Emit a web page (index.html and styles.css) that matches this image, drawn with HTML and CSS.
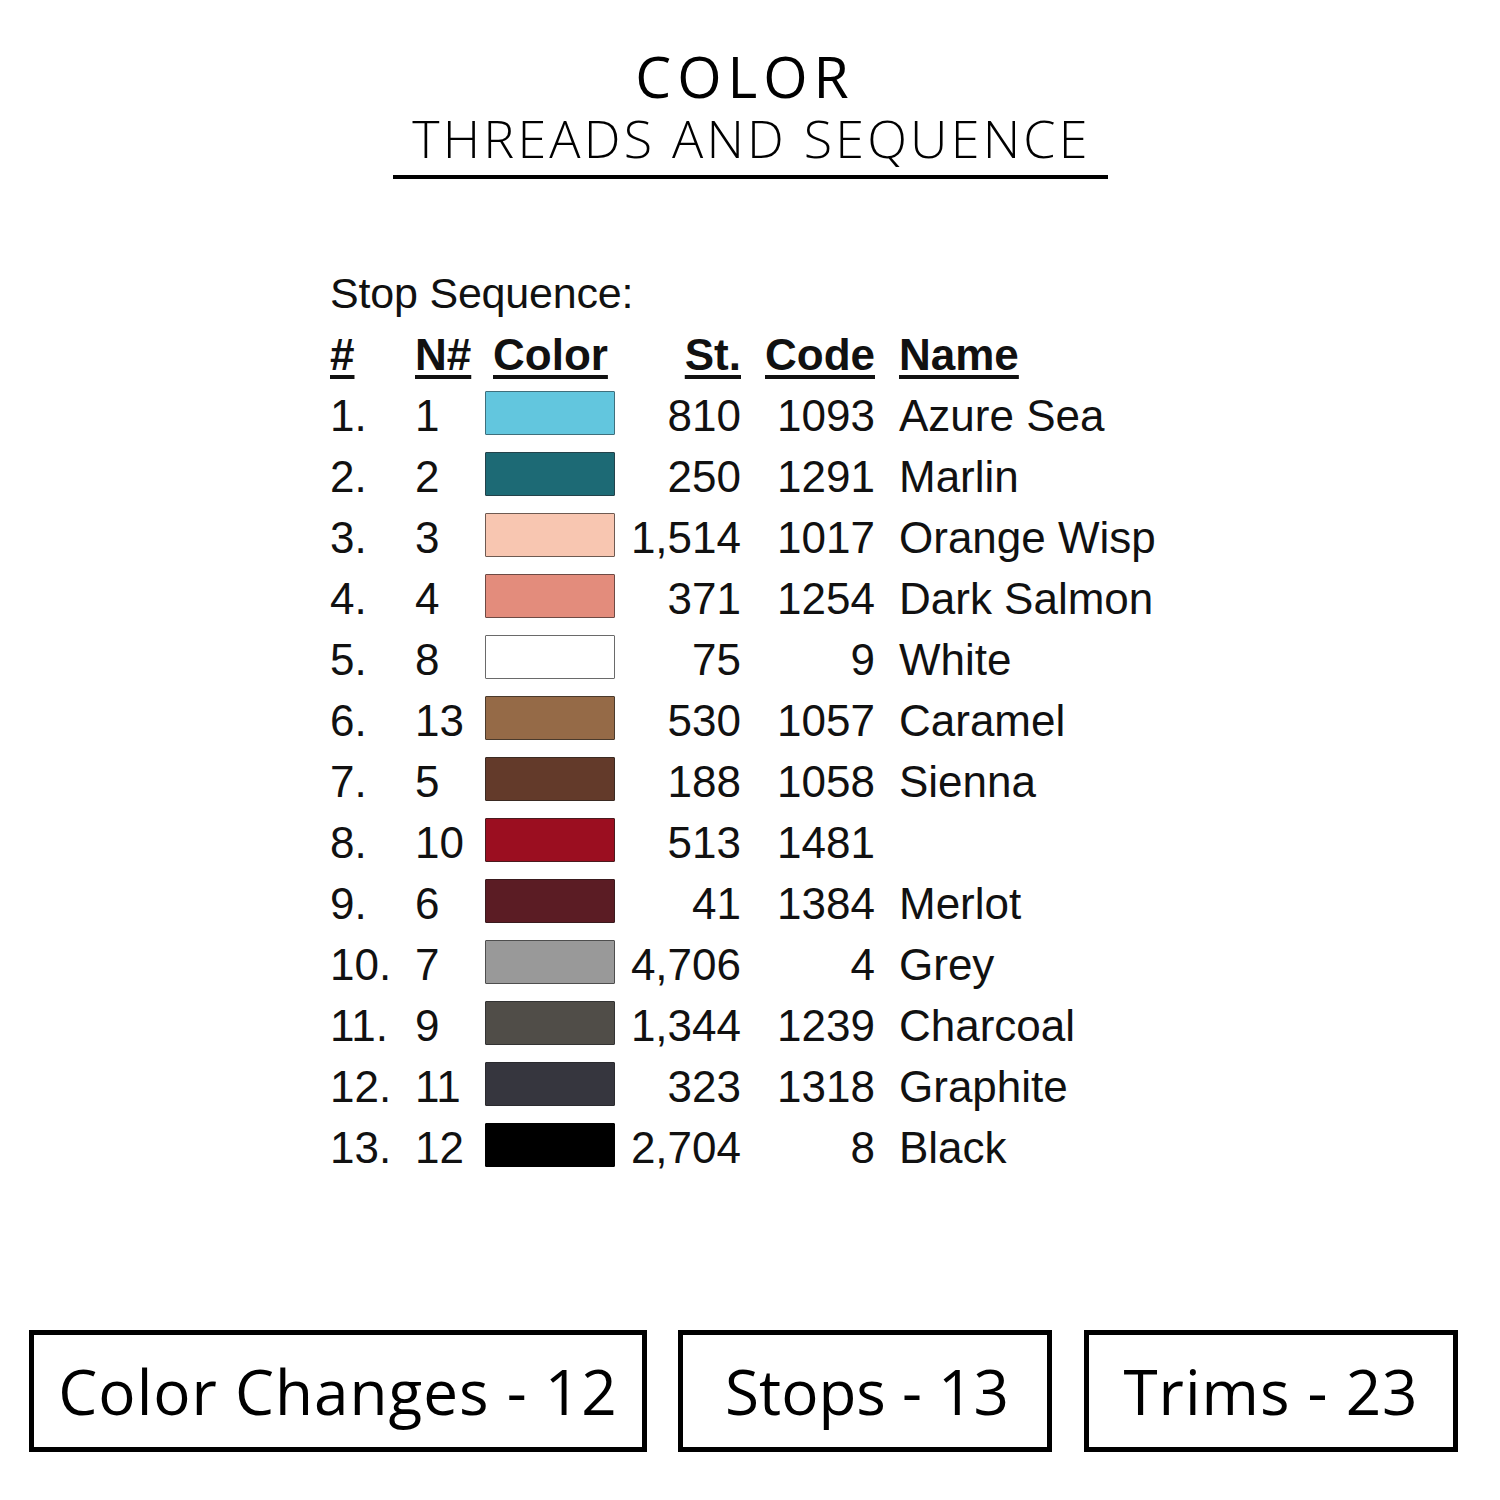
FILE: index.html
```html
<!DOCTYPE html>
<html lang="en">
<head>
<meta charset="utf-8">
<title>Color Threads and Sequence</title>
<link rel="stylesheet" href="styles.css">
</head>
<body>
<div class="page">
  <header class="title-block">
    <h1 class="title">COLOR</h1>
    <h2 class="subtitle">THREADS AND SEQUENCE</h2>
    <div class="rule"></div>
  </header>

  <section class="sequence">
    <div class="seq-label">Stop Sequence:</div>
    <div class="grid">
      <div class="hd c1"><u>#</u></div>
      <div class="hd c2"><u>N#</u></div>
      <div class="hd c3"><u>Color</u></div>
      <div class="hd c4"><u>St.</u></div>
      <div class="hd c5"><u>Code</u></div>
      <div class="hd c6"><u>Name</u></div>

      <div class="c1">1.</div><div class="c2">1</div><div class="c3"><span class="sw sw-azure"></span></div><div class="c4">810</div><div class="c5">1093</div><div class="c6">Azure Sea</div>
      <div class="c1">2.</div><div class="c2">2</div><div class="c3"><span class="sw sw-marlin"></span></div><div class="c4">250</div><div class="c5">1291</div><div class="c6">Marlin</div>
      <div class="c1">3.</div><div class="c2">3</div><div class="c3"><span class="sw sw-wisp"></span></div><div class="c4">1,514</div><div class="c5">1017</div><div class="c6">Orange Wisp</div>
      <div class="c1">4.</div><div class="c2">4</div><div class="c3"><span class="sw sw-salmon"></span></div><div class="c4">371</div><div class="c5">1254</div><div class="c6">Dark Salmon</div>
      <div class="c1">5.</div><div class="c2">8</div><div class="c3"><span class="sw sw-white"></span></div><div class="c4">75</div><div class="c5">9</div><div class="c6">White</div>
      <div class="c1">6.</div><div class="c2">13</div><div class="c3"><span class="sw sw-caramel"></span></div><div class="c4">530</div><div class="c5">1057</div><div class="c6">Caramel</div>
      <div class="c1">7.</div><div class="c2">5</div><div class="c3"><span class="sw sw-sienna"></span></div><div class="c4">188</div><div class="c5">1058</div><div class="c6">Sienna</div>
      <div class="c1">8.</div><div class="c2">10</div><div class="c3"><span class="sw sw-red"></span></div><div class="c4">513</div><div class="c5">1481</div><div class="c6"></div>
      <div class="c1">9.</div><div class="c2">6</div><div class="c3"><span class="sw sw-merlot"></span></div><div class="c4">41</div><div class="c5">1384</div><div class="c6">Merlot</div>
      <div class="c1">10.</div><div class="c2">7</div><div class="c3"><span class="sw sw-grey"></span></div><div class="c4">4,706</div><div class="c5">4</div><div class="c6">Grey</div>
      <div class="c1">11.</div><div class="c2">9</div><div class="c3"><span class="sw sw-charcoal"></span></div><div class="c4">1,344</div><div class="c5">1239</div><div class="c6">Charcoal</div>
      <div class="c1">12.</div><div class="c2">11</div><div class="c3"><span class="sw sw-graphite"></span></div><div class="c4">323</div><div class="c5">1318</div><div class="c6">Graphite</div>
      <div class="c1">13.</div><div class="c2">12</div><div class="c3"><span class="sw sw-black"></span></div><div class="c4">2,704</div><div class="c5">8</div><div class="c6">Black</div>
    </div>
  </section>

  <footer class="stats">
    <div class="stat stat-wide">Color Changes - 12</div>
    <div class="stat stat-mid">Stops - 13</div>
    <div class="stat stat-right">Trims - 23</div>
  </footer>
</div>
</body>
</html>
```

FILE: styles.css
```css
* { box-sizing: border-box; }
html, body { margin: 0; padding: 0; background: #fff; }
.page {
  width: 1500px;
  height: 1500px;
  position: relative;
  color: #111;
}

.title-block {
  display: flex;
  flex-direction: column;
  align-items: center;
  padding-top: 44px;
}
.title {
  margin: 0;
  font-family: "Open Sans", "DejaVu Sans", sans-serif;
  font-weight: 500;
  font-size: 57px;
  line-height: 64px;
  letter-spacing: 6px;
  padding-right: 10px;
  color: #000;
}
.subtitle {
  margin: 0;
  font-family: "Open Sans", "DejaVu Sans", sans-serif;
  font-weight: 300;
  font-size: 52px;
  line-height: 60px;
  letter-spacing: 3.2px;
  padding-left: 3px;
  color: #000;
}
.rule {
  width: 715px;
  height: 4px;
  background: #000;
  margin-top: 7px;
}

.sequence {
  padding-left: 330px;
  margin-top: 90px;
  font-family: "Liberation Sans", Arial, sans-serif;
  color: #111;
}
.seq-label {
  font-size: 43px;
  line-height: 48px;
  height: 48px;
  letter-spacing: -0.2px;
}
.grid {
  margin-top: 8px;
  display: grid;
  grid-template-columns: 85px 70px 130px 126px 134px auto;
  grid-auto-rows: 61px;
  font-size: 44px;
  line-height: 60px;
}
.grid > div { white-space: nowrap; }
.hd { font-weight: 700; }
.hd u {
  text-decoration: underline;
  text-decoration-thickness: 4px;
  text-underline-offset: 5px;
}
.c4, .c5 { text-align: right; }
.hd.c3 { padding-left: 8px; }
.c6 { padding-left: 24px; }
.c3 { display: flex; align-items: flex-start; }
.sw {
  display: block;
  width: 130px;
  height: 44px;
  margin-top: 5px;
  border: 1.5px solid #3d3d3d;
  border-radius: 1px;
}
.sw-azure { background: #62c6de; border-color: #3f6f7c; }
.sw-marlin { background: #1d6a75; border-color: #23424a; }
.sw-wisp { background: #f8c6b1; border-color: #6e5a52; }
.sw-salmon { background: #e38c7c; border-color: #6d4a44; }
.sw-white { background: #ffffff; border-color: #6a6a6a; }
.sw-caramel { background: #956a47; border-color: #4a3a2c; }
.sw-sienna { background: #633a2a; border-color: #3a2a22; }
.sw-red { background: #9b0e20; border-color: #4a1a1e; }
.sw-merlot { background: #5b1c24; border-color: #3a1a1e; }
.sw-grey { background: #999999; border-color: #4e4e4e; }
.sw-charcoal { background: #504d48; border-color: #333; }
.sw-graphite { background: #36363e; border-color: #2a2a2e; }
.sw-black { background: #000; border-color: #000; }

.stats {
  position: absolute;
  left: 0;
  top: 1330px;
  width: 1500px;
  display: flex;
  padding-left: 29px;
  gap: 31px;
}
.stat {
  height: 122px;
  border: 5px solid #000;
  display: flex;
  align-items: center;
  justify-content: center;
  font-family: "Open Sans", "DejaVu Sans", sans-serif;
  font-size: 62px;
  letter-spacing: 1px;
  color: #000;
  white-space: nowrap;
}
.stat-wide { width: 618px; }
.stat-mid { width: 374px; letter-spacing: 0; padding-left: 4px; }
.stat-right { width: 374px; margin-left: 1px; }
```
